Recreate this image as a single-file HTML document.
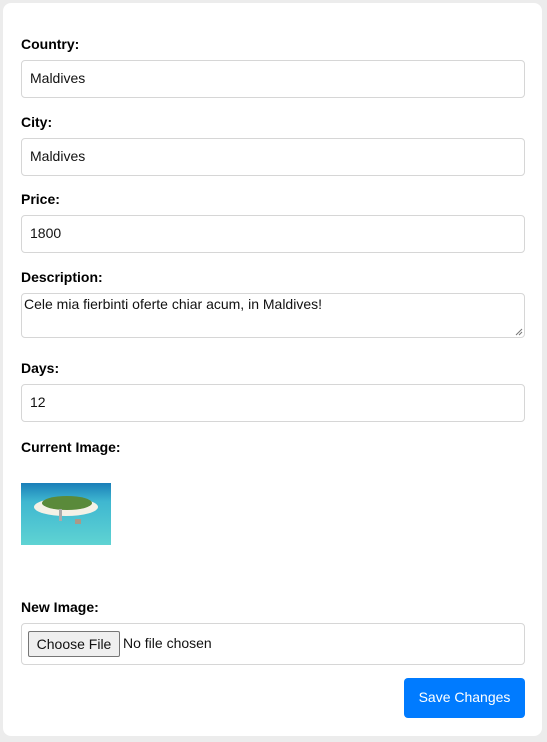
<!DOCTYPE html>
<html><head><style>
body{margin:0;background:#ececec;width:547px;height:742px;overflow:hidden;font-family:"Liberation Sans",Arial,sans-serif;position:relative}
.card{position:absolute;left:3px;top:3px;width:539px;height:733px;background:#fff;border-radius:8px}
.l{position:absolute;left:21px;font-size:14px;font-weight:bold;color:#000}
.i{position:absolute;left:21px;border:1px solid #d6d6d6;border-radius:4px;font-size:14px;color:#111;box-sizing:border-box;width:504px;padding-left:8px}
</style></head><body>
<div class="card"></div>
<div class="l" style="top:36px">Country:</div>
<div class="i" style="top:60px;height:38px;line-height:34px">Maldives</div>
<div class="l" style="top:114px">City:</div>
<div class="i" style="top:138px;height:38px;line-height:34px">Maldives</div>
<div class="l" style="top:191px">Price:</div>
<div class="i" style="top:215px;height:38px;line-height:34px">1800</div>
<div class="l" style="top:269px">Description:</div>
<div class="i" style="top:293px;height:45px;line-height:18px;padding-left:2px;padding-top:1px;font-size:14px">Cele mia fierbinti oferte chiar acum, in Maldives!
<svg style="position:absolute;right:1px;bottom:1px" width="8" height="8"><path d="M1 7L7 1M4 7L7 4" stroke="#777" stroke-width="1"/></svg></div>
<div class="l" style="top:360px">Days:</div>
<div class="i" style="top:384px;height:38px;line-height:34px">12</div>
<div class="l" style="top:439px">Current Image:</div>
<svg style="position:absolute;left:21px;top:483px" width="90" height="62">
<defs><linearGradient id="g" x1="0" y1="0" x2="0" y2="1"><stop offset="0" stop-color="#1a7fb8"/><stop offset=".3" stop-color="#3fb7d0"/><stop offset="1" stop-color="#5fd3d3"/></linearGradient></defs>
<rect width="90" height="62" fill="url(#g)"/>
<ellipse cx="45" cy="24" rx="32" ry="9" fill="#f4f1e6"/>
<ellipse cx="46" cy="20" rx="25" ry="7" fill="#5a8a3a"/>
<rect x="38" y="26" width="3" height="12" fill="#aaa"/>
<rect x="54" y="36" width="6" height="5" fill="#a98"/>
</svg>
<div class="l" style="top:599px">New Image:</div>
<div class="i" style="top:623px;height:42px;padding-left:7px">
<div style="position:absolute;left:6px;top:7px;width:92px;height:26px;border:1px solid #767676;background:#efefef;border-radius:2px;box-sizing:border-box;font-size:14px;line-height:24px;text-align:center">Choose File</div>
<div style="position:absolute;left:101px;top:10px;font-size:14px;line-height:18px">No file chosen</div>
</div>
<div style="position:absolute;left:404px;top:678px;width:121px;height:40px;background:#007bff;border-radius:4px;color:#fff;font-size:14px;line-height:39px;text-align:center">Save Changes</div>
</body></html>
